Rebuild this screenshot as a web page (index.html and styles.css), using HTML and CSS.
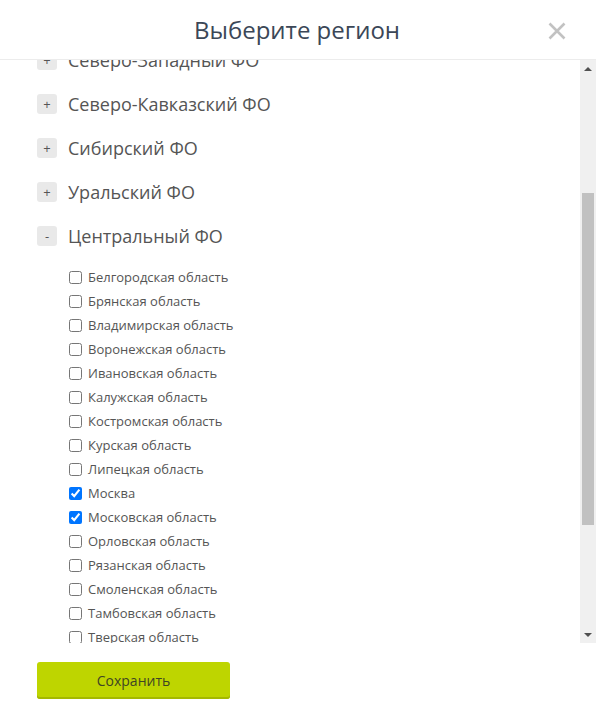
FILE: index.html
```html
<!DOCTYPE html>
<html lang="ru">
<head>
<meta charset="utf-8">
<link rel="stylesheet" href="styles.css">
</head>
<body>
<div class="modal">
  <div class="header">
    <span></span>
    <h1 class="title">Выберите регион</h1>
    <button class="close" aria-label="Закрыть">
      <svg width="18" height="18" viewBox="0 0 18 18"><path d="M1.5 1.5L16.5 16.5M16.5 1.5L1.5 16.5" stroke="#c2c2c2" stroke-width="2.6" stroke-linecap="butt"/></svg>
    </button>
  </div>
  <div class="body">
    <div class="viewport">
      <div class="list">
        <div class="group"><span class="toggle">+</span><span class="gname">Северо-Западный ФО</span></div>
        <div class="group"><span class="toggle">+</span><span class="gname">Северо-Кавказский ФО</span></div>
        <div class="group"><span class="toggle">+</span><span class="gname">Сибирский ФО</span></div>
        <div class="group"><span class="toggle">+</span><span class="gname">Уральский ФО</span></div>
        <div class="group"><span class="toggle minus">-</span><span class="gname">Центральный ФО</span></div>
        <ul class="items">
          <li><label><input type="checkbox"><span>Белгородская область</span></label></li>
          <li><label><input type="checkbox"><span>Брянская область</span></label></li>
          <li><label><input type="checkbox"><span>Владимирская область</span></label></li>
          <li><label><input type="checkbox"><span>Воронежская область</span></label></li>
          <li><label><input type="checkbox"><span>Ивановская область</span></label></li>
          <li><label><input type="checkbox"><span>Калужская область</span></label></li>
          <li><label><input type="checkbox"><span>Костромская область</span></label></li>
          <li><label><input type="checkbox"><span>Курская область</span></label></li>
          <li><label><input type="checkbox"><span>Липецкая область</span></label></li>
          <li><label><input type="checkbox" checked><span>Москва</span></label></li>
          <li><label><input type="checkbox" checked><span>Московская область</span></label></li>
          <li><label><input type="checkbox"><span>Орловская область</span></label></li>
          <li><label><input type="checkbox"><span>Рязанская область</span></label></li>
          <li><label><input type="checkbox"><span>Смоленская область</span></label></li>
          <li><label><input type="checkbox"><span>Тамбовская область</span></label></li>
          <li><label><input type="checkbox"><span>Тверская область</span></label></li>
          <li><label><input type="checkbox"><span>Тульская область</span></label></li>
        </ul>
      </div>
    </div>
    <div class="scrollbar">
      <div class="arrow up"></div>
      <div class="track">
        <div class="thumb"></div>
      </div>
      <div class="arrow down"></div>
    </div>
  </div>
  <div class="footer">
    <button class="save">Сохранить</button>
  </div>
</div>
</body>
</html>
```
FILE: styles.css
```css
* { box-sizing: border-box; }
html, body { margin: 0; padding: 0; background: #fff; }
body { font-family: "Open Sans", "Noto Sans", sans-serif; color: #555; }

.modal {
  width: 596px;
  height: 719px;
  display: flex;
  flex-direction: column;
}

.header {
  height: 60px;
  border-bottom: 1px solid #ececec;
  display: grid;
  grid-template-columns: 1fr auto 1fr;
  align-items: center;
  flex: none;
}
.title {
  margin: 0;
  font-weight: 400;
  font-size: 24px;
  color: #3b4757;
  line-height: 32px;
  padding-top: 1px;
  margin-left: -2px;
}
.close {
  justify-self: end;
  margin-right: 30px;
  border: 0;
  background: none;
  padding: 0;
  width: 18px;
  height: 18px;
  display: flex;
  margin-top: 3px;
}

.body {
  height: 583px;
  display: flex;
  flex: none;
}
.viewport {
  flex: 1;
  overflow: hidden;
}
.list {
  margin-top: -22px;
  padding-left: 37px;
}
.group {
  height: 44px;
  display: flex;
  align-items: center;
  gap: 11px;
}
.toggle {
  width: 20px;
  height: 20px;
  border-radius: 3px;
  background: #e9e9e9;
  color: #555;
  font-size: 13px;
  line-height: 20px;
  text-align: center;
}
.gname {
  font-size: 18px;
  color: #555;
  line-height: 24px;
}
.items {
  list-style: none;
  margin: 0;
  padding: 7px 0 0 32px;
}
.items li {
  height: 24px;
  display: flex;
  align-items: center;
}
.items label {
  display: flex;
  align-items: center;
  gap: 6px;
  font-size: 13px;
  color: #555;
}
.items input {
  margin: 0;
  width: 13px;
  height: 13px;
}

.scrollbar {
  width: 16px;
  background: #f0f0f0;
  display: flex;
  flex-direction: column;
}
.arrow {
  height: 17px;
  display: flex;
  align-items: center;
  justify-content: center;
}
.arrow::before {
  content: "";
  border-left: 4px solid transparent;
  border-right: 4px solid transparent;
}
.arrow.up::before { border-bottom: 4px solid #505050; }
.arrow.down::before { border-top: 4px solid #505050; }
.track {
  flex: 1;
  padding: 116px 2px 0 2px;
}
.thumb {
  height: 332px;
  background: #c1c1c1;
}

.footer {
  padding: 19px 0 0 37px;
}
.save {
  width: 193px;
  height: 37px;
  border: 0;
  border-radius: 3px;
  background: #bed500;
  box-shadow: inset 0 -2px 0 #a4b800;
  font-family: "Open Sans", "Noto Sans", sans-serif;
  font-size: 14px;
  color: #3f4524;
  padding: 0 0 1px;
}
```
